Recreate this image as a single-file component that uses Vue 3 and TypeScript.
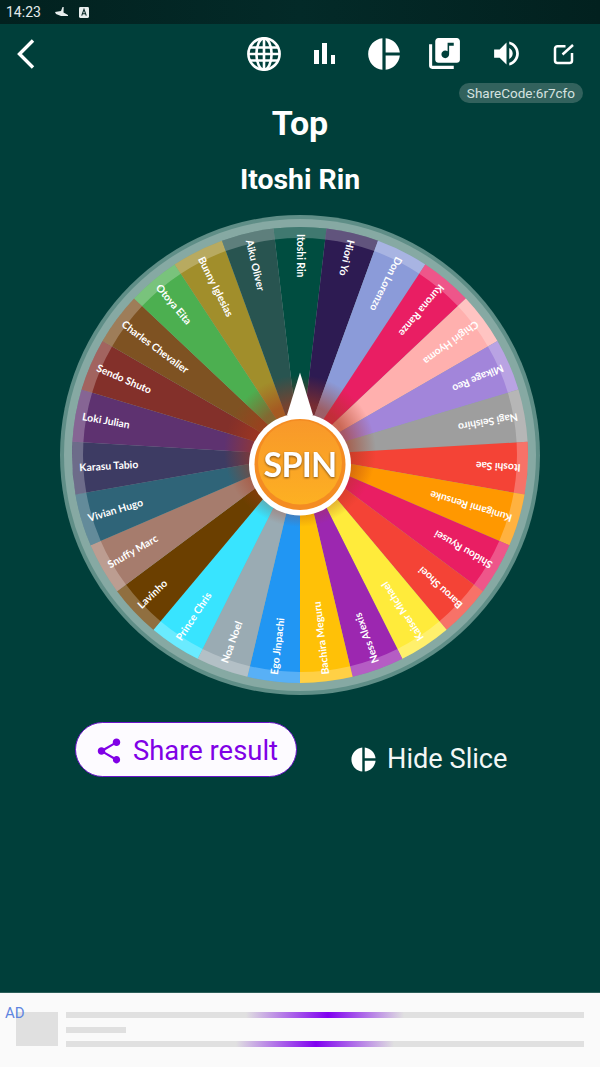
<template>
  <div class="page">
    <div class="status-bar">
      <span class="clock">14:23</span>
      <svg class="status-icon" width="14" height="14" viewBox="0 0 14 14">
        <path d="M0 7 6 6 7.500 2h1.200L8.500 7.500 13 10v1H6L1 9Z" fill="#e8eeee" />
      </svg>
      <svg class="status-icon" width="10" height="11" viewBox="0 0 11 12">
        <rect width="11" height="12" rx="1.500" fill="#e8eeee" />
        <path d="M3 9.500 5.500 2.500 8 9.500M3.900 7.300h3.200" fill="none" stroke="#0a2a29" stroke-width="1.200" />
      </svg>
    </div>

    <header class="top-bar">
      <svg class="back" width="20" height="32" viewBox="0 0 20 32">
        <path d="M17 2.500 3.500 16 17 29.500" fill="none" stroke="#fff" stroke-width="3.400" />
      </svg>
      <div class="tools">
        <span class="tool">
          <svg width="36" height="36" viewBox="0 0 36 36" fill="none" stroke="#fff" stroke-width="2.600">
            <circle cx="18" cy="18" r="15.600" />
            <ellipse cx="18" cy="18" rx="7.600" ry="15.600" />
            <path d="M18 2.400v31.200M4 11.500h28M2.400 18h31.200M4 24.500h28" />
          </svg>
        </span>
        <span class="tool">
          <svg width="24" height="24" viewBox="0 0 24 24" fill="#fff">
            <rect x="2" y="8" width="5" height="14" />
            <rect x="10" y="1" width="5" height="21" />
            <rect x="19" y="13" width="4" height="9" />
          </svg>
        </span>
        <span class="tool">
          <svg width="38" height="38" viewBox="0 0 24 24" fill="#fff">
            <path :d="pieIcon" />
          </svg>
        </span>
        <span class="tool">
          <svg width="37" height="37" viewBox="0 0 24 24" fill="#fff">
            <path d="M20 2H8c-1.100 0-2 .9-2 2v12c0 1.100.9 2 2 2h12c1.100 0 2-.9 2-2V4c0-1.100-.9-2-2-2zm-2 5h-3v5.500c0 1.380-1.120 2.500-2.500 2.500S10 13.880 10 12.500s1.120-2.500 2.500-2.500c.57 0 1.080.19 1.500.51V5h4v2zM4 6H2v14c0 1.100.9 2 2 2h14v-2H4V6z" />
          </svg>
        </span>
        <span class="tool volume">
          <svg width="33" height="33" viewBox="0 0 24 24" fill="#fff">
            <path d="M3 9v6h4l5 5V4L7 9H3zm13.500 3c0-1.770-1.020-3.290-2.500-4.030v8.050c1.480-.73 2.500-2.250 2.500-4.020zM14 3.230v2.060c2.890.86 5 3.540 5 6.710s-2.110 5.850-5 6.710v2.060c4.010-.91 7-4.490 7-8.770s-2.990-7.860-7-8.770z" />
          </svg>
        </span>
        <span class="tool">
          <svg width="22" height="22" viewBox="0 0 22 22" fill="none" stroke="#fff" stroke-width="2.500">
            <path d="M12.500 3.200H4.500A2.500 2.500 0 0 0 2 5.700V17.500A2.500 2.500 0 0 0 4.500 20H16.500A2.500 2.500 0 0 0 19 17.500V10" />
            <path d="M9.500 11.500 20 2" />
          </svg>
        </span>
      </div>
    </header>

    <div class="share-code">ShareCode:6r7cfo</div>

    <h1 class="title">Top</h1>
    <h2 class="result">Itoshi Rin</h2>

    <svg class="wheel" width="480" height="480" viewBox="0 0 480 480">
      <defs>
        <radialGradient id="hubGlow">
          <stop offset="0.62" stop-color="#a8381c" stop-opacity="0.6" />
          <stop offset="1" stop-color="#a8381c" stop-opacity="0" />
        </radialGradient>
        <linearGradient id="hubFill" x1="0" y1="0" x2="0" y2="1">
          <stop offset="0" stop-color="#f8982a" />
          <stop offset="1" stop-color="#fdb022" />
        </linearGradient>
      </defs>
      <circle cx="240" cy="240" r="240" fill="#5f8e87" />
      <circle cx="240" cy="240" r="236" fill="#86a9a3" />
      <g v-for="slice in slices" :key="slice.name">
        <path :d="slice.path" :fill="slice.color" />
        <path :d="slice.tip" fill="#fff" fill-opacity="0.25" />
      </g>
      <circle cx="240" cy="236" r="76" fill="url(#hubGlow)" />
      <text
        v-for="slice in slices"
        :key="slice.name + '-label'"
        class="slice-label"
        :transform="slice.labelTransform"
      >{{ slice.name }}</text>
      <path d="M240 157.500 253 200H227Z" fill="#fff" />
      <circle cx="240" cy="249.500" r="51" fill="#fff" />
      <circle cx="240" cy="249.500" r="45.500" fill="#f48c22" />
      <circle cx="240" cy="247.500" r="42" fill="url(#hubFill)" />
      <text class="spin" x="240" y="262" text-anchor="middle">SPIN</text>
    </svg>

    <div class="actions">
      <button class="share-btn" type="button">
        <svg width="30" height="30" viewBox="0 0 24 24" fill="#8000e6">
          <path d="M18 16.080c-.76 0-1.440.3-1.960.77L8.910 12.700c.05-.23.09-.46.09-.7s-.04-.47-.09-.7l7.050-4.110c.54.5 1.250.81 2.040.81 1.660 0 3-1.340 3-3s-1.340-3-3-3-3 1.340-3 3c0 .24.04.47.09.7L8.040 9.810C7.500 9.310 6.790 9 6 9c-1.660 0-3 1.340-3 3s1.340 3 3 3c.79 0 1.500-.31 2.040-.81l7.120 4.160c-.05.21-.08.43-.08.65 0 1.610 1.310 2.920 2.920 2.920 1.610 0 2.920-1.310 2.920-2.920s-1.310-2.920-2.920-2.920z" />
        </svg>
        <span>Share result</span>
      </button>
      <div class="hide-slice">
        <svg width="29" height="29" viewBox="0 0 24 24" fill="#fff">
          <path :d="pieIcon" />
        </svg>
        <span>Hide Slice</span>
      </div>
    </div>

    <footer class="ad">
      <span class="ad-mark">AD</span>
      <div class="ad-thumb"></div>
      <div class="ad-lines">
        <div class="ad-line shimmer-a"></div>
        <div class="ad-line short"></div>
        <div class="ad-line shimmer-b"></div>
      </div>
    </footer>
  </div>
</template>

<script setup lang="ts">
import { computed } from 'vue'

interface Entry {
  name: string
  color: string
}

const pieIcon =
  'M11 2v20c-5.070-.5-9-4.790-9-10s3.930-9.500 9-10zm2.030 0v8.990H22c-.47-4.740-4.240-8.520-8.970-8.990zm0 11.010V22c4.740-.47 8.500-4.250 8.970-8.990h-8.970z'

const entries: Entry[] = [
  { name: 'Itoshi Rin', color: '#004d40' },
  { name: 'Hiori Yo', color: '#2d1b52' },
  { name: 'Don Lorenzo', color: '#8b9bd9' },
  { name: 'Kurona Ranze', color: '#e91e63' },
  { name: 'Chigiri Hyoma', color: '#ffb0ae' },
  { name: 'Mikage Reo', color: '#a285da' },
  { name: 'Nagi Seishiro', color: '#9e9e9e' },
  { name: 'Itoshi Sae', color: '#f44336' },
  { name: 'Kunigami Rensuke', color: '#ff9800' },
  { name: 'Shidou Ryusei', color: '#e91e63' },
  { name: 'Barou Shoei', color: '#f44336' },
  { name: 'Kaiser Michael', color: '#ffeb3b' },
  { name: 'Ness Alexis', color: '#9c27b0' },
  { name: 'Bachira Meguru', color: '#ffc107' },
  { name: 'Ego Jinpachi', color: '#2196f3' },
  { name: 'Noa Noel', color: '#9aabb3' },
  { name: 'Prince Chris', color: '#38e4ff' },
  { name: 'Lavinho', color: '#6b3f00' },
  { name: 'Snuffy Marc', color: '#a67c6d' },
  { name: 'Vivian Hugo', color: '#2f6478' },
  { name: 'Karasu Tabio', color: '#3d3b63' },
  { name: 'Loki Julian', color: '#5e3270' },
  { name: 'Sendo Shuto', color: '#83302a' },
  { name: 'Charles Chevalier', color: '#7e5222' },
  { name: 'Otoya Eita', color: '#4caf50' },
  { name: 'Bunny Iglesias', color: '#a18e2b' },
  { name: 'Aiku Oliver', color: '#285450' }
]

const CX = 240
const CY = 240
const SLICE_R = 228
const TIP_R = 217
const LABEL_R = 221

const polar = (r: number, deg: number) => {
  const a = ((deg - 90) * Math.PI) / 180
  return `${(CX + r * Math.cos(a)).toFixed(2)} ${(CY + r * Math.sin(a)).toFixed(2)}`
}

// 0deg is the top of the wheel, the first slice is centered on it
const slices = computed(() => {
  const step = 360 / entries.length
  return entries.map((entry, i) => {
    const mid = i * step
    const from = mid - step / 2
    const to = mid + step / 2
    return {
      ...entry,
      path: `M${CX} ${CY}L${polar(SLICE_R, from)}A${SLICE_R} ${SLICE_R} 0 0 1 ${polar(SLICE_R, to)}Z`,
      tip: `M${polar(TIP_R, from)}L${polar(SLICE_R, from)}A${SLICE_R} ${SLICE_R} 0 0 1 ${polar(SLICE_R, to)}L${polar(TIP_R, to)}A${TIP_R} ${TIP_R} 0 0 0 ${polar(TIP_R, from)}Z`,
      labelTransform: `rotate(${mid.toFixed(2)} ${CX} ${CY}) translate(${CX} ${CY - LABEL_R}) rotate(90) translate(0 3.500)`
    }
  })
})
</script>

<style>
html,
body {
  margin: 0;
  background: #003f3a;
}
</style>

<style scoped>
.page {
  width: 600px;
  height: 1067px;
  display: flex;
  flex-direction: column;
  background: #003f3a;
  font-family: Roboto, 'Noto Sans', sans-serif;
  color: #fff;
  overflow: hidden;
}

.status-bar {
  height: 24px;
  display: flex;
  align-items: center;
  gap: 10px;
  padding-left: 6px;
  background: linear-gradient(90deg, #02211f, #032a28 50%, #02211f);
  font-size: 14px;
  color: #e4ecec;
}

.clock {
  margin-right: 4px;
}

.top-bar {
  height: 59px;
  display: flex;
  align-items: center;
  justify-content: space-between;
  padding: 0 6px 0 16px;
}

.tools {
  display: flex;
  align-items: center;
}

.tool {
  width: 60px;
  display: flex;
  align-items: center;
  justify-content: center;
}

.volume {
  padding-left: 4px;
  width: 56px;
}

.share-code {
  align-self: flex-end;
  height: 20px;
  line-height: 20px;
  margin-right: 17px;
  padding: 0 8px;
  border-radius: 10px;
  background: #32625d;
  color: #d6e2e0;
  font-size: 13.5px;
}

.title {
  margin: 0;
  height: 40px;
  line-height: 40px;
  text-align: center;
  font-size: 34px;
  font-weight: 700;
}

.result {
  margin: 19px 0 0;
  height: 36px;
  line-height: 36px;
  text-align: center;
  font-size: 28.4px;
  font-weight: 700;
}

.wheel {
  display: block;
  flex: none;
  margin: 17px 0 0 60px;
  overflow: visible;
}

.slice-label {
  font-family: Lato, 'Open Sans', sans-serif;
  font-size: 10.4px;
  font-weight: 700;
  fill: #fff;
}

.spin {
  font-family: Lato, 'Open Sans', sans-serif;
  font-size: 34px;
  font-weight: 700;
  letter-spacing: -0.8px;
  fill: #fff;
  filter: drop-shadow(0 1px 1px rgba(110, 70, 20, 0.9));
}

.actions {
  display: flex;
  padding-left: 75px;
  margin-top: 27px;
}

.share-btn {
  width: 222px;
  height: 55px;
  display: flex;
  align-items: center;
  gap: 9px;
  padding: 2px 0 0 18px;
  box-sizing: border-box;
  border: 1px solid #6a14c8;
  border-radius: 28px;
  background: #fdfbff;
  color: #8000e6;
  font-family: inherit;
  font-size: 27.4px;
}

.hide-slice {
  display: flex;
  align-items: center;
  gap: 9px;
  margin: 19px 0 0 52px;
  height: 36px;
  font-size: 27.2px;
  color: #f2f7f6;
}

.ad {
  position: relative;
  margin-top: auto;
  height: 75px;
  box-sizing: border-box;
  display: flex;
  gap: 8px;
  padding: 19px 16px 0;
  background: #fafafa;
  border-top: 1px solid #2c5f5a;
}

.ad-mark {
  position: absolute;
  left: 5px;
  top: 11px;
  font-size: 15px;
  color: #5f85e0;
}

.ad-thumb {
  width: 42px;
  height: 34px;
  background: #e0e0e0;
}

.ad-lines {
  flex: 1;
  display: flex;
  flex-direction: column;
  justify-content: space-between;
  height: 35px;
}

.ad-line {
  height: 6px;
  background: #e0e0e0;
}

.short {
  width: 60px;
}

.shimmer-a {
  background: linear-gradient(90deg, #e0e0e0 180px, #8000f0 262px, #e0e0e0 338px);
}

.shimmer-b {
  background: linear-gradient(90deg, #e0e0e0 170px, #8000f0 250px, #e0e0e0 328px);
}
</style>
